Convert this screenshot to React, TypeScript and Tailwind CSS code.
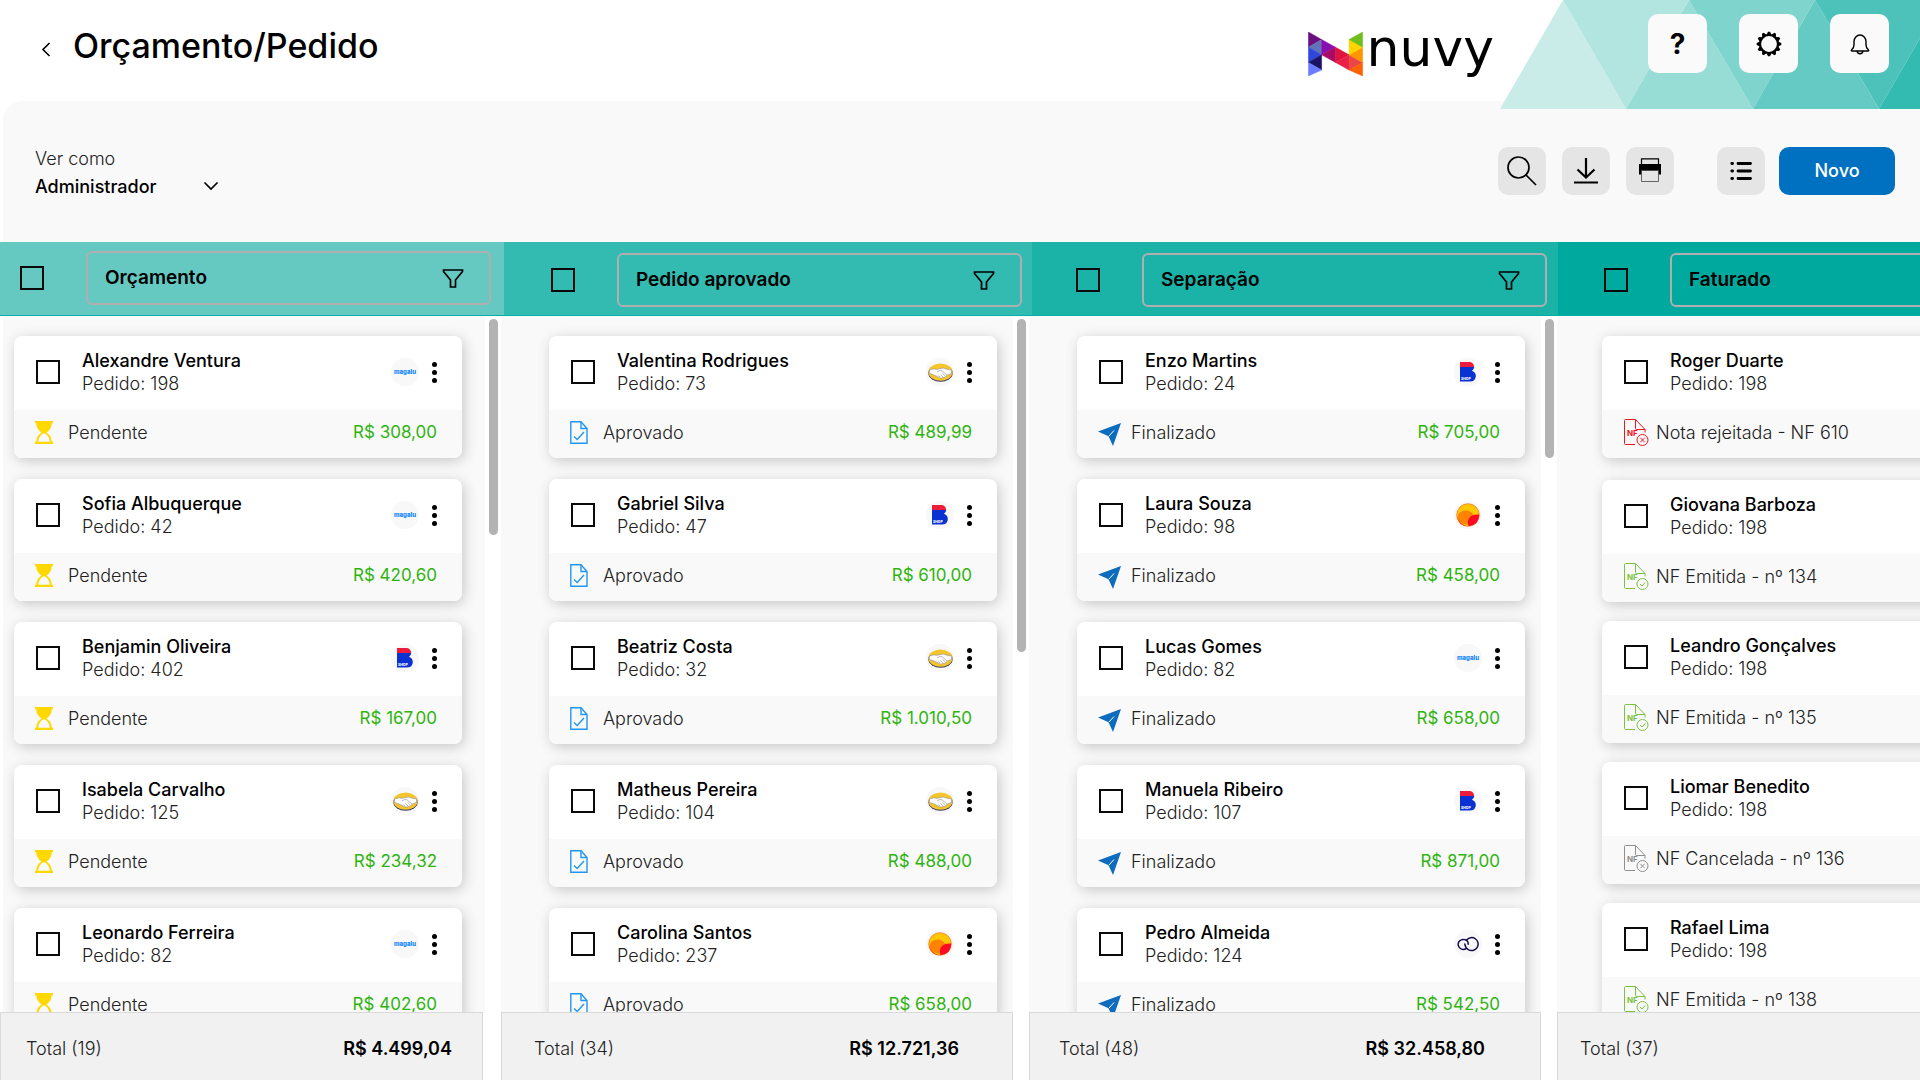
import React from "react";

type Brand = "magalu" | "ml" | "casas" | "fire" | "cloud";
type Status = "pending" | "approved" | "done" | "rejected" | "issued" | "cancelled";
type Order = { name: string; order: string; brand: Brand; status: Status; label: string; price: string };
type Column = {
  title: string;
  count: number;
  total: string;
  headClass: string;
  bodyClass: string;
  listClass: string;
  footClass: string;
  thumbClass: string;
  orders: Order[];
};

const make = (rows: [string, string, Brand, string][], status: Status, label: string): Order[] =>
  rows.map(([name, order, brand, price]) => ({ name, order, brand, status, label, price }));

const columns: Column[] = [
  {
    title: "Orçamento",
    count: 19,
    total: "R$ 4.499,04",
    headClass: "w-[504px] bg-[#65c9c2] pl-5 pr-[13px] pt-[9px]",
    bodyClass: "w-[501px]",
    listClass: "ml-[3px] pl-[11px] gap-[21px]",
    footClass: "mr-[18px] pl-[25px] pr-[30px]",
    thumbClass: "h-[216px]",
    orders: make(
      [
        ["Alexandre Ventura", "198", "magalu", "R$ 308,00"],
        ["Sofia Albuquerque", "42", "magalu", "R$ 420,60"],
        ["Benjamin Oliveira", "402", "casas", "R$ 167,00"],
        ["Isabela Carvalho", "125", "ml", "R$ 234,32"],
        ["Leonardo Ferreira", "82", "magalu", "R$ 402,60"],
      ],
      "pending",
      "Pendente"
    ),
  },
  {
    title: "Pedido aprovado",
    count: 34,
    total: "R$ 12.721,36",
    headClass: "w-[528px] bg-[#33bab1] pl-[47px] pr-[10px] pt-[11px]",
    bodyClass: "w-[528px]",
    listClass: "pl-12 gap-[21px]",
    footClass: "mr-4 pl-8 pr-[53px]",
    thumbClass: "h-[333px]",
    orders: make(
      [
        ["Valentina Rodrigues", "73", "ml", "R$ 489,99"],
        ["Gabriel Silva", "47", "casas", "R$ 610,00"],
        ["Beatriz Costa", "32", "ml", "R$ 1.010,50"],
        ["Matheus Pereira", "104", "ml", "R$ 488,00"],
        ["Carolina Santos", "237", "fire", "R$ 658,00"],
      ],
      "approved",
      "Aprovado"
    ),
  },
  {
    title: "Separação",
    count: 48,
    total: "R$ 32.458,80",
    headClass: "w-[526px] bg-[#1bb2a8] pl-11 pr-[11px] pt-[11px]",
    bodyClass: "w-[528px]",
    listClass: "pl-12 gap-[21px]",
    footClass: "mr-4 pl-[29px] pr-[55px]",
    thumbClass: "h-[139px]",
    orders: make(
      [
        ["Enzo Martins", "24", "casas", "R$ 705,00"],
        ["Laura Souza", "98", "fire", "R$ 458,00"],
        ["Lucas Gomes", "82", "magalu", "R$ 658,00"],
        ["Manuela Ribeiro", "107", "casas", "R$ 871,00"],
        ["Pedro Almeida", "124", "cloud", "R$ 542,50"],
      ],
      "done",
      "Finalizado"
    ),
  },
  {
    title: "Faturado",
    count: 37,
    total: "R$ 27.310,40",
    headClass: "w-[528px] bg-[#00a99d] pl-[46px] pr-[11px] pt-[11px]",
    bodyClass: "w-[528px]",
    listClass: "pl-[45px] gap-[19px] [&>li:first-child]:mb-[3px]",
    footClass: "mr-4 pl-[22px] pr-4",
    thumbClass: "h-[139px]",
    orders: [
      { name: "Roger Duarte", order: "198", brand: "magalu", status: "rejected", label: "Nota rejeitada - NF 610", price: "R$ 308,00" },
      { name: "Giovana Barboza", order: "198", brand: "magalu", status: "issued", label: "NF Emitida - nº 134", price: "R$ 420,60" },
      { name: "Leandro Gonçalves", order: "198", brand: "ml", status: "issued", label: "NF Emitida - nº 135", price: "R$ 167,00" },
      { name: "Liomar Benedito", order: "198", brand: "casas", status: "cancelled", label: "NF Cancelada - nº 136", price: "R$ 234,32" },
      { name: "Rafael Lima", order: "198", brand: "ml", status: "issued", label: "NF Emitida - nº 138", price: "R$ 402,60" },
    ],
  },
];

function BrandLogo({ brand }: { brand: Brand }) {
  return (
    <span className="flex size-7 shrink-0 items-center justify-center rounded-full bg-[#f8f8f8]">
      {brand === "magalu" && <span className="text-[6px] font-extrabold leading-none text-[#0f86ff]">magalu</span>}
      {brand === "ml" && (
        <svg width="25" height="19" viewBox="0 0 25 19" aria-label="Mercado Livre">
          <ellipse cx="12.5" cy="10" rx="12.2" ry="8.800" fill="#3a3d6b" />
          <ellipse cx="12.5" cy="9.200" rx="12" ry="8.600" fill="#f5c52c" />
          <path d="M1.500 7 6 5.800Q9.500 7 12 5.600Q15 4.300 19 6.200L23.500 7V10.500L19.500 12Q17.500 14.500 14.500 14.800Q12 15.700 10 13.900L6 12 1.500 10.500Z" fill="#fff" stroke="#8b8b93" strokeWidth=".6" />
          <path d="m9 9 3-1.800 2 .6 5 4.200M12.500 11.500l2.500 2.500M10.500 12.500l1.800 1.700M14.500 10.300l2.700 2.600" fill="none" stroke="#8b8b93" strokeWidth=".6" />
        </svg>
      )}
      {brand === "casas" && (
        <svg width="16" height="20" viewBox="0 0 16 20" aria-label="Casas Bahia">
          <path d="M0 0h10a4.500 4.500 0 0 1 4 5H0Z" fill="#ee1c3c" />
          <path d="M0 5h14.200q-.2 2.600-2.200 3.800 3.800 1.500 3.800 5.200 0 5.600-6.300 5.600H0Z" fill="#0a32d2" />
          <text x="1" y="18" fontSize="3.400" fontWeight="800" fill="#fff" fontFamily="Inter">SHOP</text>
        </svg>
      )}
      {brand === "fire" && (
        <svg width="24" height="24" viewBox="0 0 24 24" aria-label="Americanas">
          <circle cx="12" cy="12" r="11.300" fill="#ffc800" stroke="#ff6a2a" strokeWidth=".7" />
          <path d="M1 14.500Q3 7 10.500 7.500 15 8 17 11.500L22.500 12.500A11.300 11.300 0 0 1 1 14.500Z" fill="#ff8200" />
          <path d="M1 14Q4 21 11 23.200 3 23 1 14Z" fill="#ff4a10" />
          <path d="M12.500 23.200Q10.500 17 14.500 13.500 18 11 23.200 11.500 23.200 22 12.500 23.200Z" fill="#ff0a24" />
        </svg>
      )}
      {brand === "cloud" && (
        <svg width="22" height="18" viewBox="0 0 22 18" fill="none" stroke="#150a4a" strokeWidth="1.500" strokeLinecap="round" aria-label="Nuvemshop">
          <path d="M9.300 13.300A5 5 0 1 1 7.500 4.600Q11.300 5.300 11.200 9.300" />
          <path d="M7.800 9Q8.300 13 11.200 14.600A6.500 6.500 0 1 0 9.400 5.200" />
        </svg>
      )}
    </span>
  );
}

function NotaIcon({ tone, ok }: { tone: string; ok: boolean }) {
  return (
    <svg width="26" height="28" viewBox="0 0 26 28" fill="none" stroke={tone} strokeWidth="1">
      <path d="M12 25.500H2.500a1 1 0 0 1-1-1V1.500a1 1 0 0 1 1-1H12.500L22 10.500V13.500" />
      <path d="M12.500.5V9.500a1 1 0 0 0 1 1H22" />
      <text x="4" y="17" fontSize="8" fontWeight="700" fill={tone} stroke="none" fontFamily="Inter">NF</text>
      <circle cx="19.500" cy="21" r="5.500" fill="#f9f9f9" />
      {ok ? <path d="m17 21 2 2 3.300-3.600" /> : <path d="m17.300 18.800 4.400 4.400M21.700 18.800l-4.400 4.400" />}
    </svg>
  );
}

function StatusIcon({ status }: { status: Status }) {
  switch (status) {
    case "pending":
      return (
        <svg width="18" height="23" viewBox="0 0 18 23">
          <path d="M0 0h18v2.200h-1.300q.2 5.500-5.200 9.300 5.400 3.800 5.200 9.300H18V23H0v-2.200h1.300Q1.100 15.300 6.500 11.500 1.100 7.700 1.300 2.200H0Z" fill="#ffd800" />
          <path d="M3.200 20.800Q3.500 15.500 8 12.600h2q4.500 2.900 4.800 8.200Z" fill="#f9f9f9" />
        </svg>
      );
    case "approved":
      return (
        <svg width="18" height="23" viewBox="0 0 18 23" fill="none" stroke="#2196f3" strokeWidth="1.400">
          <path d="M.8.8H11L17 7.500V22.200H.8Z" />
          <path d="M11 .8V7.500H17M4 15.500l3.200 3L14 11" />
        </svg>
      );
    case "done":
      return (
        <svg className="mt-1" width="23" height="23" viewBox="0 0 23 23">
          <path d="M23 0 15 23 10.500 13.200 0 8.500Z" fill="#0d6cbd" />
          <path d="m11 13 5-5.500" stroke="#fff" strokeWidth="1" />
        </svg>
      );
    case "rejected":
      return <NotaIcon tone="#f0141e" ok={false} />;
    case "issued":
      return <NotaIcon tone="#7cc242" ok />;
    default:
      return <NotaIcon tone="#8f8f8f" ok={false} />;
  }
}

function Check({ label }: { label: string }) {
  return (
    <input
      type="checkbox"
      aria-label={label}
      className="size-6 shrink-0 appearance-none border-2 border-[#0a0a0a] checked:bg-black"
    />
  );
}

function Card({ o }: { o: Order }) {
  return (
    <li className="w-[448px] shrink-0 overflow-hidden rounded-lg bg-white shadow-[2px_3px_14px_rgba(0,0,0,0.2)]">
      <div className="flex h-[74px] items-center pb-0.5 pl-[22px] pr-[25px]">
        <Check label={"Selecionar " + o.name} />
        <div className="ml-[22px] flex-1 leading-[23px]">
          <h3 className="text-[18px] font-medium">{o.name}</h3>
          <p className="text-[18px] font-light text-[#222]">Pedido: {o.order}</p>
        </div>
        <BrandLogo brand={o.brand} />
        <button type="button" aria-label="Mais opções" className="ml-[13px] flex flex-col gap-[3px]">
          <i className="size-[5px] rounded-full bg-black" />
          <i className="size-[5px] rounded-full bg-black" />
          <i className="size-[5px] rounded-full bg-black" />
        </button>
      </div>
      <div className="flex h-12 items-center bg-[#f9f9f9] pb-[3px] pl-[21px] pr-[25px]">
        <span className="flex w-[33px] shrink-0">
          <StatusIcon status={o.status} />
        </span>
        <span className="flex-1 text-[18px] font-light text-[#222]">{o.label}</span>
        <span className="text-[17px] text-[#2fb40f]">{o.price}</span>
      </div>
    </li>
  );
}

const tiles: [string, string][] = [
  ["0,109 63,0 126,109", "#c9ece8"],
  ["63,0 189,0 126,109", "#b2e5e0"],
  ["126,109 189,0 253,109", "#97ddd6"],
  ["189,0 315,0 253,109", "#7fd5cd"],
  ["253,109 315,0 379,109", "#65cac3"],
  ["315,0 442,0 379,109", "#4cc2ba"],
  ["379,109 442,0 505,109", "#33bab1"],
];

const logoFacets: [string, string][] = [
  ["37,35 37,81 77,58", "#6d0f80"],
  ["37,81 77,58 77,104", "#6274b8"],
  ["37,81 37,127 77,104", "#2e48da"],
  ["37,127 77,104 77,150", "#1b1464"],
  ["37,127 37,168 77,150", "#6a7dff"],
  ["77,58 77,104 119,81", "#8a0fb0"],
  ["77,104 119,81 119,127", "#a90a68"],
  ["119,81 119,127 160,104", "#dc143f"],
  ["119,127 160,104 160,150", "#ea2046"],
  ["160,104 160,150 201,127", "#ec4548"],
  ["160,150 201,127 201,168", "#ff6200"],
  ["201,81 160,104 201,127", "#ff9600"],
  ["160,58 201,81 160,104", "#ffd500"],
  ["201,35 201,81 160,58", "#70bf1d"],
];

function HeaderButton({ label, children }: { label: string; children: React.ReactNode }) {
  return (
    <button type="button" aria-label={label} className="flex size-[59px] items-center justify-center rounded-[10px] bg-[#fafafa]">
      {children}
    </button>
  );
}

function ToolButton({ label, children }: { label: string; children: React.ReactNode }) {
  return (
    <button type="button" aria-label={label} className="flex size-12 items-center justify-center rounded-[10px] bg-[#e5e5e5]">
      {children}
    </button>
  );
}

export default function App() {
  return (
    <div className="flex h-screen flex-col overflow-hidden bg-white font-[Inter,'Noto_Sans',sans-serif] text-black">
      <header className="relative flex h-[101px] shrink-0 items-start">
        <svg className="absolute right-0 top-0 z-0" width="420" height="109" viewBox="0 0 420 109" aria-hidden="true">
          {tiles.map(([points, fill]) => (
            <polygon key={points} points={points} fill={fill} />
          ))}
        </svg>
        <button type="button" aria-label="Voltar" className="ml-[41px] mt-[42px]">
          <svg width="10" height="15" viewBox="0 0 10 15" fill="none" stroke="#000" strokeWidth="1.600">
            <path d="M8.500 1 2 7.500 8.500 14" />
          </svg>
        </button>
        <h1 className="ml-[22px] mt-[26px] text-[34px] font-medium leading-10">Orçamento/Pedido</h1>
        <div className="ml-auto mr-[154px] flex items-start pt-8">
          <svg width="55" height="44" viewBox="37 35 164 133" aria-hidden="true">
            {logoFacets.map(([points, fill]) => (
              <polygon key={points} points={points} fill={fill} stroke={fill} strokeWidth="1.500" strokeLinejoin="round" />
            ))}
          </svg>
          <span className="ml-1 -mt-3 font-['DejaVu_Sans',sans-serif] text-[52px] leading-[56px]">nuvy</span>
        </div>
        <div className="relative z-10 mr-[31px] mt-[14px] flex gap-8">
          <HeaderButton label="Ajuda">
            <span className="text-[28px] font-bold leading-none">?</span>
          </HeaderButton>
          <HeaderButton label="Configurações">
            <svg width="26" height="26" viewBox="-13 -13 26 26">
              <circle r="9" fill="none" stroke="#000" strokeWidth="2.200" />
              {[0, 30, 60, 90, 120, 150, 180, 210, 240, 270, 300, 330].map((a) => (
                <path key={a} d="M-2.600-9 -1-12.300H1L2.600-9Z" fill="#000" transform={`rotate(${a})`} />
              ))}
            </svg>
          </HeaderButton>
          <HeaderButton label="Notificações">
            <svg width="20" height="22" viewBox="0 0 20 22" fill="none" stroke="#000" strokeWidth="1.400" strokeLinejoin="round">
              <path d="M1.500 17Q4 15 4 12V8.500a6 6.500 0 0 1 12 0V12q0 3 2.500 5 .6 1-.5 1H2q-1.100 0-.5-1Z" />
              <path d="M7.200 18a2.800 2.800 0 0 0 5.600 0" />
            </svg>
          </HeaderButton>
        </div>
      </header>

      <div className="ml-[3px] flex shrink-0 items-start justify-between rounded-tl-[20px] bg-[#f9f9f9] pb-[41px] pl-8 pr-[25px] pt-11">
        <div className="leading-7">
          <label htmlFor="view" className="block text-[18px] font-light text-[#222]">
            Ver como
          </label>
          <div className="relative w-[184px]">
            <select id="view" defaultValue="adm" className="w-full appearance-none bg-transparent text-[18px] font-medium">
              <option value="adm">Administrador</option>
            </select>
            <svg className="pointer-events-none absolute right-0 top-2" width="16" height="10" viewBox="0 0 16 10" fill="none" stroke="#000" strokeWidth="1.700">
              <path d="M1.500 1.500 8 8l6.500-6.500" />
            </svg>
          </div>
        </div>
        <div className="mt-0.5 flex gap-4">
          <ToolButton label="Buscar">
            <svg width="30" height="30" viewBox="0 0 30 30" fill="none" stroke="#000" strokeWidth="1.700">
              <circle cx="11.500" cy="11.500" r="10.500" />
              <path d="m19 19 10 10" />
            </svg>
          </ToolButton>
          <ToolButton label="Baixar">
            <svg width="26" height="26" viewBox="0 0 26 26" fill="none" stroke="#000" strokeWidth="2.200">
              <path d="M13 0v19M4.500 11.500 13 19.500l8.500-8M1 24.500h24" />
            </svg>
          </ToolButton>
          <ToolButton label="Imprimir">
            <svg width="24" height="26" viewBox="0 0 24 26">
              <path d="M3.500 7V.8h17V7" fill="none" stroke="#000" strokeWidth="1.200" />
              <path d="M1 6h22v10.500H1Z" fill="#000" />
              <path d="M3.500 12.500h17v11h-17Z" fill="#e5e5e5" stroke="#444" strokeWidth=".8" />
            </svg>
          </ToolButton>
          <div className="ml-[27px] flex gap-[14px]">
            <ToolButton label="Lista">
              <svg width="22" height="20" viewBox="0 0 22 20" fill="none" stroke="#000" strokeWidth="2.800" strokeLinecap="round">
                <path d="M8 2.500h12.500M8 10h12.500M8 17.500h12.500M1.800 2.500h.8M1.800 10h.8M1.800 17.500h.8" />
              </svg>
            </ToolButton>
            <button type="button" className="h-12 w-[116px] rounded-[10px] bg-[#0071c1] pb-0.5 text-[18px] font-medium text-white">
              Novo
            </button>
          </div>
        </div>
      </div>

      <div className="flex shrink-0">
        {columns.map((c) => (
          <div key={c.title} className={"flex h-[74px] shrink-0 items-start border-b border-[#00b3a6] " + c.headClass}>
            <div className="mt-[15px] flex">
              <Check label={"Selecionar todos: " + c.title} />
            </div>
            <div className="ml-[42px] flex h-[54px] flex-1 items-center justify-between rounded-md border-2 border-[#b0aeb1] pl-[17px] pr-[25px]">
              <h2 className="text-[19px] font-semibold">{c.title}</h2>
              <button type="button" aria-label={"Filtrar " + c.title}>
                <svg width="22" height="19" viewBox="0 0 22 19" fill="none" stroke="#000" strokeWidth="1.700">
                  <path d="M1.500 1h19v1.500L13.500 11v7h-5v-7L1.500 2.500Z" />
                </svg>
              </button>
            </div>
          </div>
        ))}
      </div>

      <main className="flex min-h-0 flex-1">
        {columns.map((c) => (
          <section key={c.title} aria-label={c.title} className={"flex shrink-0 flex-col " + c.bodyClass}>
            <div className="flex min-h-0 flex-1">
              <ul className={"flex flex-1 flex-col overflow-hidden bg-[#f9f9f9] pt-5 " + c.listClass}>
                {c.orders.map((o) => (
                  <Card key={o.name} o={o} />
                ))}
              </ul>
              <div className="w-4 shrink-0 px-1 pt-[3px]">
                <div className={"w-[9px] rounded-full bg-[#b3b3b3] " + c.thumbClass} />
              </div>
            </div>
            <footer className={"flex h-[68px] shrink-0 items-center justify-between border border-b-0 border-[#d9d9d9] bg-[#f1f1f1] pt-1 " + c.footClass}>
              <span className="text-[18px] font-light text-[#222]">Total ({c.count})</span>
              <strong className="text-[18px] font-semibold">{c.total}</strong>
            </footer>
          </section>
        ))}
      </main>
    </div>
  );
}
